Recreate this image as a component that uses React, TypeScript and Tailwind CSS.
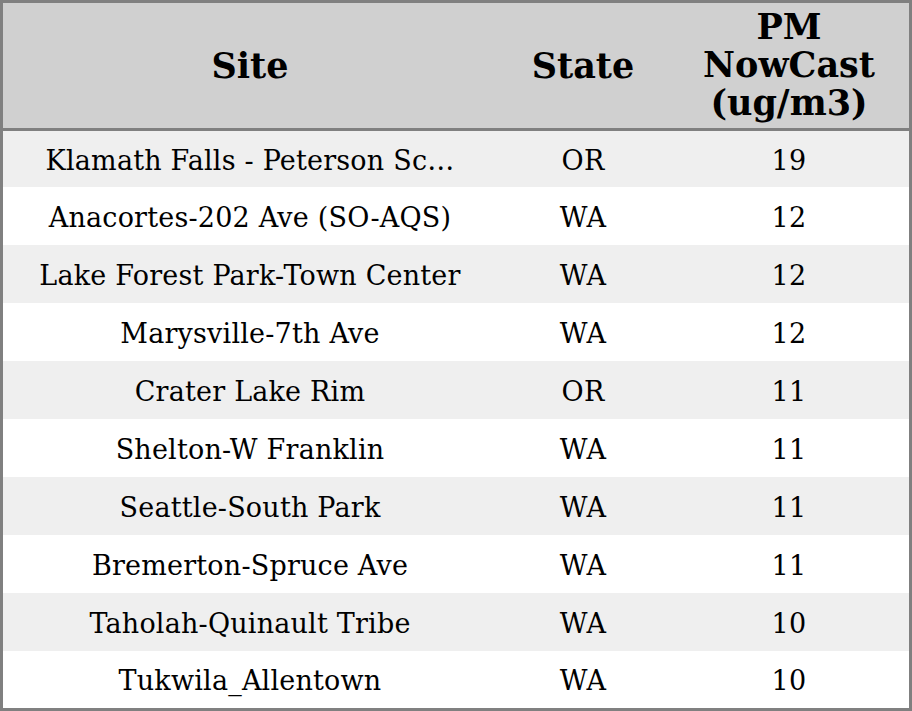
import React from 'react';

interface Row {
  site: string;
  state: string;
  pm: number;
}

const rows: Row[] = [
  { site: 'Klamath Falls - Peterson Sc…', state: 'OR', pm: 19 },
  { site: 'Anacortes-202 Ave (SO-AQS)', state: 'WA', pm: 12 },
  { site: 'Lake Forest Park-Town Center', state: 'WA', pm: 12 },
  { site: 'Marysville-7th Ave', state: 'WA', pm: 12 },
  { site: 'Crater Lake Rim', state: 'OR', pm: 11 },
  { site: 'Shelton-W Franklin', state: 'WA', pm: 11 },
  { site: 'Seattle-South Park', state: 'WA', pm: 11 },
  { site: 'Bremerton-Spruce Ave', state: 'WA', pm: 11 },
  { site: 'Taholah-Quinault Tribe', state: 'WA', pm: 10 },
  { site: 'Tukwila_Allentown', state: 'WA', pm: 10 },
];

const cols = 'grid grid-cols-[494px_172px_240px]';

export default function App() {
  return (
    <div className="w-[912px] h-[711px] bg-white border-[3px] border-[#808080] text-black [font-family:'DejaVu_Serif',serif]">
      <div className={`${cols} h-[128px] bg-[#d0d0d0] border-b-[3px] border-[#808080] font-bold text-[35px] leading-[38px] items-center text-center`}>
        <div>Site</div>
        <div>State</div>
        <div className="pb-[2px]">
          <div>PM</div>
          <div>NowCast</div>
          <div>(ug/m3)</div>
        </div>
      </div>
      {rows.map((r, i) => (
        <div
          key={i}
          className={`${cols} ${i === 0 ? 'h-[56px]' : i === rows.length - 1 ? 'h-[57px]' : 'h-[58px]'} ${i % 2 === 0 ? 'bg-[#efefef]' : 'bg-white'} pt-[4px] items-center text-center text-[27px] tracking-[0.2px]`}
        >
          <div className="whitespace-nowrap">{r.site}</div>
          <div>{r.state}</div>
          <div>{r.pm}</div>
        </div>
      ))}
    </div>
  );
}
